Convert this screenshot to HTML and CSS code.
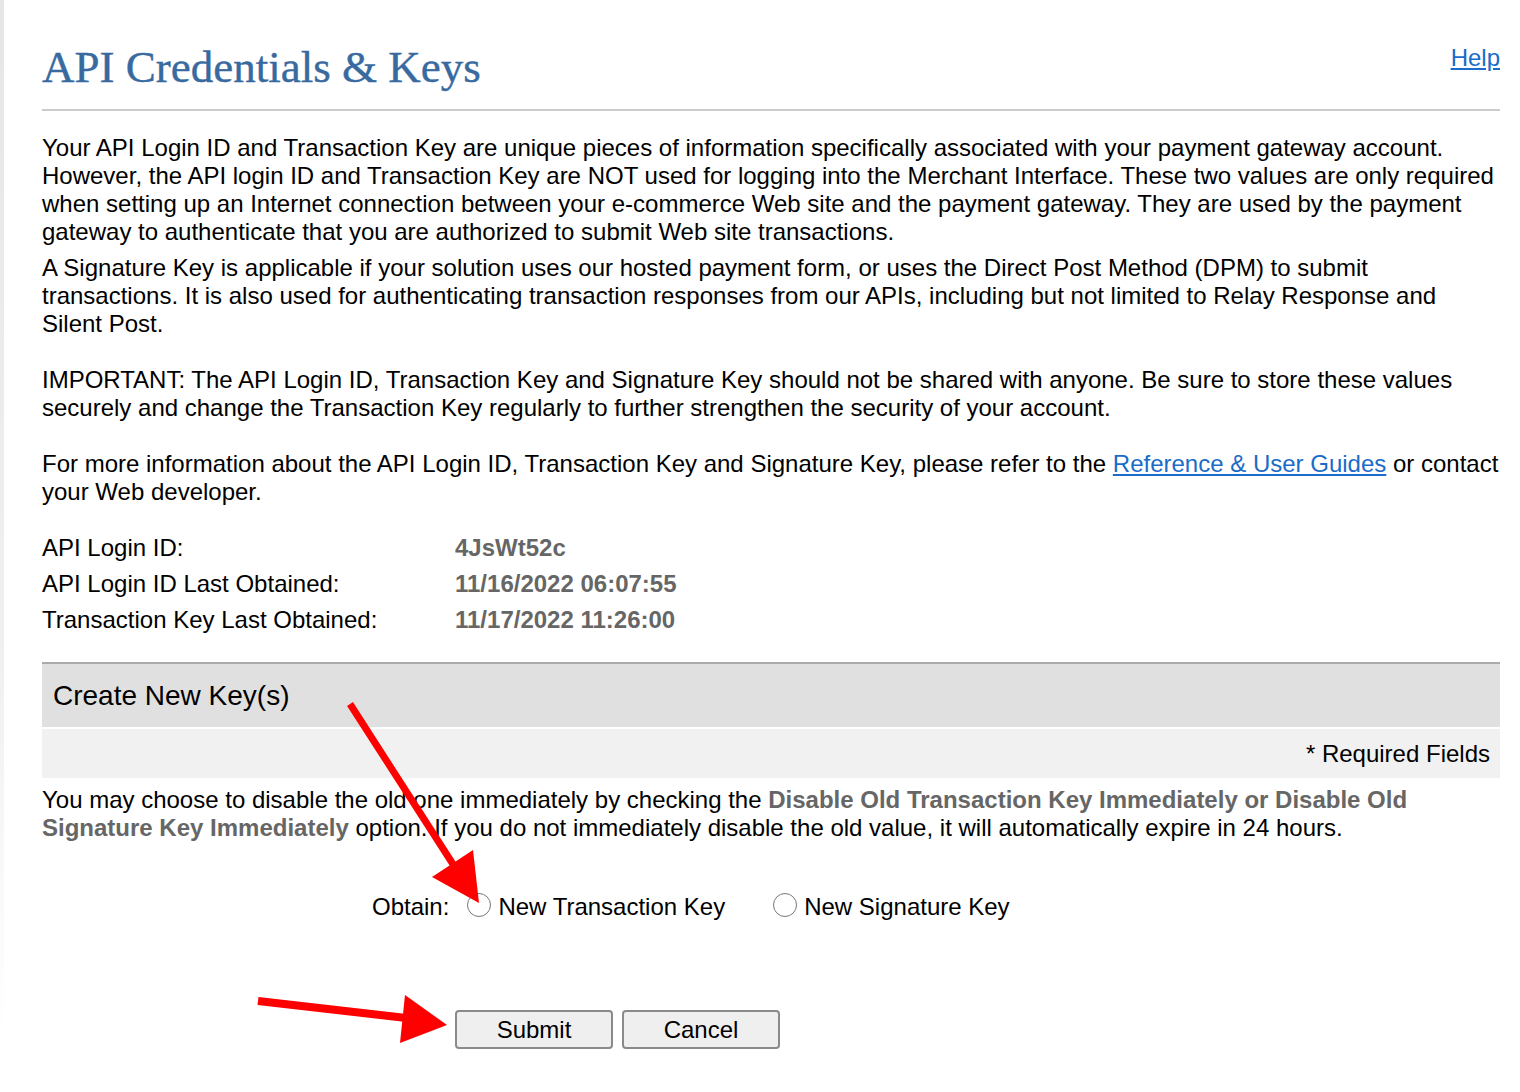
FILE: index.html
```html
<!DOCTYPE html>
<html lang="en">
<head>
<meta charset="utf-8">
<title>API Credentials &amp; Keys</title>
<link rel="stylesheet" href="styles.css">
</head>
<body>
<div class="page">
  <header class="head">
    <h1 class="title">API Credentials &amp; Keys</h1>
    <a class="help" href="#">Help</a>
  </header>

  <p class="para first">Your API Login ID and Transaction Key are unique pieces of information specifically associated with your payment gateway account. However, the API login ID and Transaction Key are NOT used for logging into the Merchant Interface. These two values are only required when setting up an Internet connection between your e-commerce Web site and the payment gateway. They are used by the payment gateway to authenticate that you are authorized to submit Web site transactions.</p>
  <p class="para second">A Signature Key is applicable if your solution uses our hosted payment form, or uses the Direct Post Method (DPM) to submit transactions. It is also used for authenticating transaction responses from our APIs, including but not limited to Relay Response and Silent Post.</p>
  <p class="para gap">IMPORTANT: The API Login ID, Transaction Key and Signature Key should not be shared with anyone. Be sure to store these values securely and change the Transaction Key regularly to further strengthen the security of your account.</p>
  <p class="para gap">For more information about the API Login ID, Transaction Key and Signature Key, please refer to the <a class="link" href="#">Reference &amp; User Guides</a> or contact your Web developer.</p>

  <div class="info">
    <div class="row"><span class="label">API Login ID:</span><span class="value">4JsWt52c</span></div>
    <div class="row"><span class="label">API Login ID Last Obtained:</span><span class="value">11/16/2022 06:07:55</span></div>
    <div class="row"><span class="label">Transaction Key Last Obtained:</span><span class="value">11/17/2022 11:26:00</span></div>
  </div>

  <section class="create">
    <div class="create-head">Create New Key(s)</div>
    <div class="required">* Required Fields</div>
  </section>

  <p class="para note">You may choose to disable the old one immediately by checking the <b class="em">Disable Old Transaction Key Immediately or Disable Old Signature Key Immediately</b> option. If you do not immediately disable the old value, it will automatically expire in 24 hours.</p>

  <div class="obtain">
    <span class="obtain-label">Obtain:</span>
    <label class="opt"><input type="radio" name="k" class="radio"><span>New Transaction Key</span></label>
    <label class="opt"><input type="radio" name="k" class="radio"><span>New Signature Key</span></label>
  </div>

  <div class="buttons">
    <button class="btn" type="button">Submit</button>
    <button class="btn" type="button">Cancel</button>
  </div>

  <svg class="arrows" width="1520" height="1092" viewBox="0 0 1520 1092">
    <line x1="350" y1="704" x2="458" y2="872" stroke="#ff0000" stroke-width="7"/>
    <polygon points="432,877 473,850 479,903" fill="#ff0000"/>
    <line x1="258" y1="1001" x2="415" y2="1019" stroke="#ff0000" stroke-width="8"/>
    <polygon points="405,995 400,1043 447,1025" fill="#ff0000"/>
  </svg>
</div>
</body>
</html>
```

FILE: styles.css
```css
html, body {
  margin: 0;
  padding: 0;
  background: #fff;
}
body {
  font-family: "Liberation Sans", Arial, sans-serif;
  font-size: 24px;
  color: #000;
  background-image: linear-gradient(to bottom, #e6e6e6 0%, #f0f0f0 60%, #ffffff 95%);
  background-repeat: no-repeat;
  background-size: 4px 100%;
  min-height: 1092px;
}
.page {
  position: relative;
  padding: 0 20px 0 42px;
  min-height: 1092px;
  box-sizing: border-box;
}
.head {
  display: flex;
  justify-content: space-between;
  align-items: flex-start;
  padding-top: 39px;
  padding-bottom: 14px;
  border-bottom: 2px solid #cccccc;
}
.title {
  margin: 0;
  font-family: "Liberation Serif", "Times New Roman", serif;
  font-weight: normal;
  font-size: 45px;
  line-height: 56px;
  color: #386a9f;
  -webkit-text-stroke: 0.4px #386a9f;
}
.help {
  margin-top: 5px;
  color: #1a6cc8;
  line-height: 28px;
  text-decoration: underline;
}
.para {
  margin: 0;
  line-height: 28px;
}
.first { margin-top: 23px; }
.second { margin-top: 8px; }
.gap { margin-top: 28px; }
.link {
  color: #1a6cc8;
  text-decoration: underline;
}
.info {
  margin-top: 24px;
  display: flex;
  flex-direction: column;
}
.row {
  display: flex;
  line-height: 36px;
}
.label {
  width: 413px;
}
.value {
  font-weight: bold;
  color: #666666;
}
.create {
  margin-top: 24px;
  border-top: 2px solid #aaaaaa;
}
.create-head {
  background: #e0e0e0;
  height: 63px;
  display: flex;
  align-items: center;
  padding-left: 11px;
  font-size: 28px;
}
.required {
  margin-top: 2px;
  background: #f1f1f1;
  height: 49px;
  display: flex;
  align-items: center;
  justify-content: flex-end;
  padding-right: 10px;
}
.note {
  margin-top: 8px;
}
.em {
  color: #666666;
}
.obtain {
  margin-top: 47px;
  padding-left: 330px;
  display: flex;
  align-items: center;
  height: 36px;
}
.obtain-label {
  margin-right: 18px;
}
.opt {
  display: flex;
  align-items: center;
  margin-right: 48px;
}
.radio {
  appearance: none;
  -webkit-appearance: none;
  width: 24px;
  height: 24px;
  margin: -5px 7px 0 0;
  border: 1.5px solid #777;
  border-radius: 50%;
  background: #fff;
  box-sizing: border-box;
}
.buttons {
  margin-top: 85px;
  padding-left: 413px;
  display: flex;
  gap: 9px;
}
.btn {
  width: 158px;
  height: 39px;
  font-family: "Liberation Sans", Arial, sans-serif;
  font-size: 24px;
  color: #000;
  background: #efefef;
  border: 2px solid #8a8a8a;
  border-radius: 4px;
  padding: 0;
}
.arrows {
  position: absolute;
  left: 0;
  top: 0;
  pointer-events: none;
}
```
